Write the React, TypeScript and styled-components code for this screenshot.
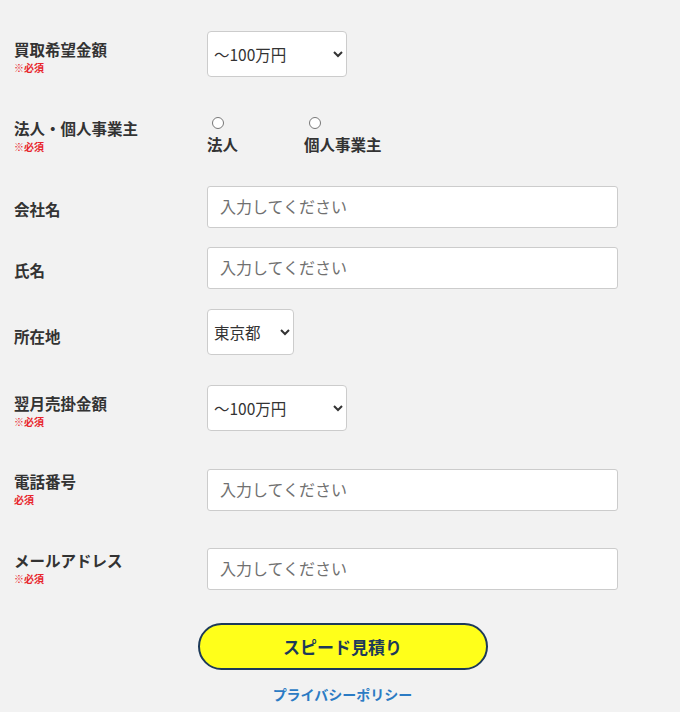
import React from 'react'
import styled, { createGlobalStyle } from 'styled-components'

const GlobalStyle = createGlobalStyle`
  html, body {
    margin: 0;
    padding: 0;
    background: #f2f2f2;
  }
  body {
    font-family: "Noto Sans CJK JP", "Noto Sans", sans-serif;
    color: #333;
  }
`

const Form = styled.form`
  padding: 31px 0 0 14px;
  display: flex;
  flex-direction: column;
`
const Row = styled.div<{ $mt?: number; $top?: boolean }>`
  display: flex;
  align-items: ${p => (p.$top ? 'flex-start' : 'center')};
  margin-top: ${p => p.$mt ?? 0}px;
`
const LabelBlock = styled.div<{ $pt?: number }>`
  width: 193px;
  flex: none;
  padding-top: ${p => p.$pt ?? 0}px;
`
const Title = styled.div`
  font-size: 15.5px;
  font-weight: 700;
  line-height: 20px;
  color: #333;
`
const Required = styled.div`
  font-size: 10px;
  font-weight: 700;
  line-height: 18px;
  color: #e8262c;
`
const Select = styled.select<{ $w: number }>`
  width: ${p => p.$w}px;
  height: 46px;
  margin-bottom: 8px;
  padding: 0 2px;
  background: #fff;
  border: 1px solid #ccc;
  border-radius: 4px;
  font-family: "Noto Sans CJK JP", sans-serif;
  font-size: 15.5px;
  color: #333;
  box-sizing: border-box;
`
const TextInput = styled.input`
  width: 411px;
  height: 42px;
  padding: 0 12px 2px;
  background: #fff;
  border: 1px solid #ccc;
  border-radius: 3px;
  font-family: "Noto Sans CJK JP", sans-serif;
  font-size: 16px;
  color: #333;
  box-sizing: border-box;
  &::placeholder {
    color: #707070;
  }
`
const RadioGroup = styled.div`
  display: flex;
`
const RadioOption = styled.label`
  display: flex;
  flex-direction: column;
  align-items: flex-start;
  width: 97px;
`
const Radio = styled.input`
  width: 12px;
  height: 12px;
  margin: 3px 3px 0 5px;
`
const RadioText = styled.span`
  margin-top: 5px;
  font-size: 15.5px;
  font-weight: 700;
  line-height: 20px;
  color: #333;
`
const Footer = styled.div`
  display: flex;
  flex-direction: column;
  align-items: center;
  margin-top: 33px;
  padding-right: 9px;
`
const SubmitButton = styled.button`
  width: 290px;
  height: 47px;
  background: #ffff1a;
  border: 2px solid #1d3a5a;
  border-radius: 24px;
  font-family: "Noto Sans CJK JP", sans-serif;
  font-size: 17px;
  font-weight: 700;
  color: #1d3a5a;
  cursor: pointer;
`
const PrivacyLink = styled.a`
  margin-top: 14px;
  font-size: 14px;
  font-weight: 700;
  line-height: 20px;
  color: #2b7bc4;
  text-decoration: none;
`

const amounts = ['～100万円', '100万円～300万円', '300万円～500万円', '500万円～']

const Field = ({ title, required }: { title: string; required?: string }) => (
  <>
    <Title>{title}</Title>
    {required && <Required>{required}</Required>}
  </>
)

const App = () => {
  return (
    <>
      <GlobalStyle />
      <Form onSubmit={e => e.preventDefault()}>
        <Row>
          <LabelBlock><Field title="買取希望金額" required="※必須" /></LabelBlock>
          <Select $w={140}>
            {amounts.map(a => <option key={a}>{a}</option>)}
          </Select>
        </Row>
        <Row $mt={29} $top>
          <LabelBlock $pt={4}><Field title="法人・個人事業主" required="※必須" /></LabelBlock>
          <RadioGroup>
            <RadioOption>
              <Radio type="radio" name="type" />
              <RadioText>法人</RadioText>
            </RadioOption>
            <RadioOption>
              <Radio type="radio" name="type" />
              <RadioText>個人事業主</RadioText>
            </RadioOption>
          </RadioGroup>
        </Row>
        <Row $mt={30}>
          <LabelBlock $pt={3}><Field title="会社名" /></LabelBlock>
          <TextInput placeholder="入力してください" />
        </Row>
        <Row $mt={19}>
          <LabelBlock $pt={3}><Field title="氏名" /></LabelBlock>
          <TextInput placeholder="入力してください" />
        </Row>
        <Row $mt={20}>
          <LabelBlock><Field title="所在地" /></LabelBlock>
          <Select $w={87}>
            <option>東京都</option>
            <option>神奈川県</option>
            <option>大阪府</option>
          </Select>
        </Row>
        <Row $mt={22}>
          <LabelBlock><Field title="翌月売掛金額" required="※必須" /></LabelBlock>
          <Select $w={140}>
            {amounts.map(a => <option key={a}>{a}</option>)}
          </Select>
        </Row>
        <Row $mt={30}>
          <LabelBlock><Field title="電話番号" required="必須" /></LabelBlock>
          <TextInput placeholder="入力してください" />
        </Row>
        <Row $mt={37}>
          <LabelBlock><Field title="メールアドレス" required="※必須" /></LabelBlock>
          <TextInput placeholder="入力してください" />
        </Row>
        <Footer>
          <SubmitButton type="submit">スピード見積り</SubmitButton>
          <PrivacyLink href="#">プライバシーポリシー</PrivacyLink>
        </Footer>
      </Form>
    </>
  )
}

export default App
